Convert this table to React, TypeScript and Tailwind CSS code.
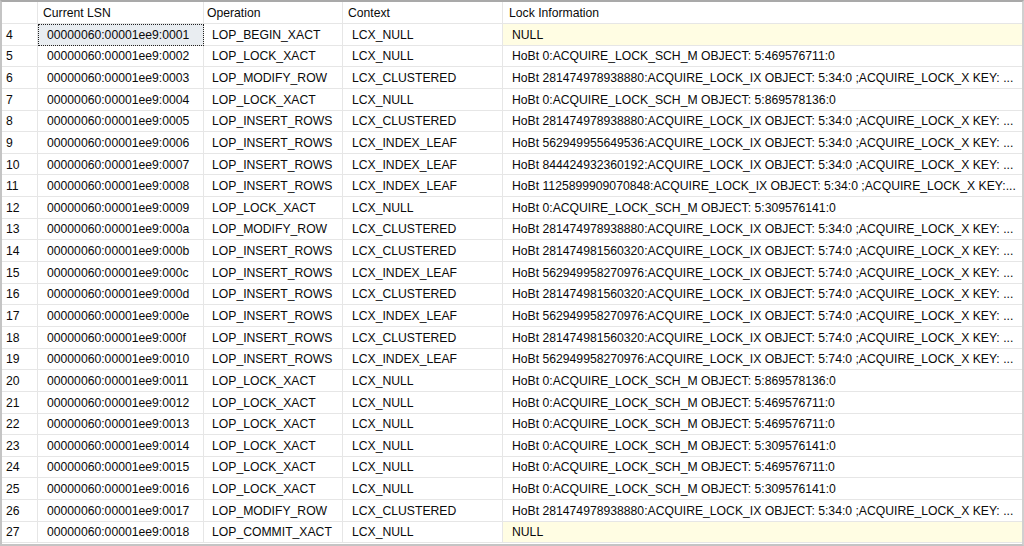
import React from "react";

type Row = [number, string, string, string, string];

const K34 = ";ACQUIRE_LOCK_X KEY: ...";
const rows: Row[] = [
  [4, "0001", "LOP_BEGIN_XACT", "LCX_NULL", "NULL"],
  [5, "0002", "LOP_LOCK_XACT", "LCX_NULL", "HoBt 0:ACQUIRE_LOCK_SCH_M OBJECT: 5:469576711:0"],
  [6, "0003", "LOP_MODIFY_ROW", "LCX_CLUSTERED", "HoBt 281474978938880:ACQUIRE_LOCK_IX OBJECT: 5:34:0 " + K34],
  [7, "0004", "LOP_LOCK_XACT", "LCX_NULL", "HoBt 0:ACQUIRE_LOCK_SCH_M OBJECT: 5:869578136:0"],
  [8, "0005", "LOP_INSERT_ROWS", "LCX_CLUSTERED", "HoBt 281474978938880:ACQUIRE_LOCK_IX OBJECT: 5:34:0 " + K34],
  [9, "0006", "LOP_INSERT_ROWS", "LCX_INDEX_LEAF", "HoBt 562949955649536:ACQUIRE_LOCK_IX OBJECT: 5:34:0 " + K34],
  [10, "0007", "LOP_INSERT_ROWS", "LCX_INDEX_LEAF", "HoBt 844424932360192:ACQUIRE_LOCK_IX OBJECT: 5:34:0 " + K34],
  [11, "0008", "LOP_INSERT_ROWS", "LCX_INDEX_LEAF", "HoBt 1125899909070848:ACQUIRE_LOCK_IX OBJECT: 5:34:0 ;ACQUIRE_LOCK_X KEY:..."],
  [12, "0009", "LOP_LOCK_XACT", "LCX_NULL", "HoBt 0:ACQUIRE_LOCK_SCH_M OBJECT: 5:309576141:0"],
  [13, "000a", "LOP_MODIFY_ROW", "LCX_CLUSTERED", "HoBt 281474978938880:ACQUIRE_LOCK_IX OBJECT: 5:34:0 " + K34],
  [14, "000b", "LOP_INSERT_ROWS", "LCX_CLUSTERED", "HoBt 281474981560320:ACQUIRE_LOCK_IX OBJECT: 5:74:0 " + K34],
  [15, "000c", "LOP_INSERT_ROWS", "LCX_INDEX_LEAF", "HoBt 562949958270976:ACQUIRE_LOCK_IX OBJECT: 5:74:0 " + K34],
  [16, "000d", "LOP_INSERT_ROWS", "LCX_CLUSTERED", "HoBt 281474981560320:ACQUIRE_LOCK_IX OBJECT: 5:74:0 " + K34],
  [17, "000e", "LOP_INSERT_ROWS", "LCX_INDEX_LEAF", "HoBt 562949958270976:ACQUIRE_LOCK_IX OBJECT: 5:74:0 " + K34],
  [18, "000f", "LOP_INSERT_ROWS", "LCX_CLUSTERED", "HoBt 281474981560320:ACQUIRE_LOCK_IX OBJECT: 5:74:0 " + K34],
  [19, "0010", "LOP_INSERT_ROWS", "LCX_INDEX_LEAF", "HoBt 562949958270976:ACQUIRE_LOCK_IX OBJECT: 5:74:0 " + K34],
  [20, "0011", "LOP_LOCK_XACT", "LCX_NULL", "HoBt 0:ACQUIRE_LOCK_SCH_M OBJECT: 5:869578136:0"],
  [21, "0012", "LOP_LOCK_XACT", "LCX_NULL", "HoBt 0:ACQUIRE_LOCK_SCH_M OBJECT: 5:469576711:0"],
  [22, "0013", "LOP_LOCK_XACT", "LCX_NULL", "HoBt 0:ACQUIRE_LOCK_SCH_M OBJECT: 5:469576711:0"],
  [23, "0014", "LOP_LOCK_XACT", "LCX_NULL", "HoBt 0:ACQUIRE_LOCK_SCH_M OBJECT: 5:309576141:0"],
  [24, "0015", "LOP_LOCK_XACT", "LCX_NULL", "HoBt 0:ACQUIRE_LOCK_SCH_M OBJECT: 5:469576711:0"],
  [25, "0016", "LOP_LOCK_XACT", "LCX_NULL", "HoBt 0:ACQUIRE_LOCK_SCH_M OBJECT: 5:309576141:0"],
  [26, "0017", "LOP_MODIFY_ROW", "LCX_CLUSTERED", "HoBt 281474978938880:ACQUIRE_LOCK_IX OBJECT: 5:34:0 " + K34],
  [27, "0018", "LOP_COMMIT_XACT", "LCX_NULL", "NULL"],
];

const grid = "grid grid-cols-[36px_166px_139px_160px_1fr]";
const cell = "border-r border-b border-[#e6e6e6] flex items-center whitespace-nowrap overflow-hidden";

export default function App() {
  return (
    <div
      className="w-[1024px] h-[546px] bg-white text-[12.2px] text-[#0a0a0a] border-t-2 border-l-2 border-b-2 border-r-2 border-t-[#a9a9a9] border-l-[#c4c4c4] border-r-[#d0d0d0] border-b-[#c4c4c4] overflow-hidden"
      style={{ fontFamily: '"Liberation Sans", Arial, sans-serif' }}
    >
      <div className={`${grid} h-[22px]`}>
        <div className={cell}></div>
        <div className={`${cell} pl-[5px] pt-[1px]`}>Current LSN</div>
        <div className={`${cell} pl-[3px] pt-[1px]`}>Operation</div>
        <div className={`${cell} pl-[5px] pt-[1px]`}>Context</div>
        <div className={`${cell} pl-[6px] pt-[1px] border-r-0`}>Lock Information</div>
      </div>
      {rows.map(([n, lsn, op, ctx, lock], i) => {
        const isNull = lock === "NULL";
        const focused = i === 0;
        return (
          <div key={n} className={`${grid} h-[21.65px]`}>
            <div className={`${cell} pl-[4px] pt-[1px]`}>{n}</div>
            <div
              className={`${cell} pl-[9px] pt-[1px] ${
                focused ? "bg-[#e9edf1] outline-1 outline-dotted outline-[#222] -outline-offset-1" : ""
              }`}
            >
              {"00000060:00001ee9:" + lsn}
            </div>
            <div className={`${cell} pl-[8px] pt-[1px]`}>{op}</div>
            <div className={`${cell} pl-[9px] pt-[1px]`}>{ctx}</div>
            <div className={`${cell} pl-[9px] pt-[1px] border-r-0 ${isNull ? "bg-[#fffde3]" : ""}`}>{lock}</div>
          </div>
        );
      })}
    </div>
  );
}
